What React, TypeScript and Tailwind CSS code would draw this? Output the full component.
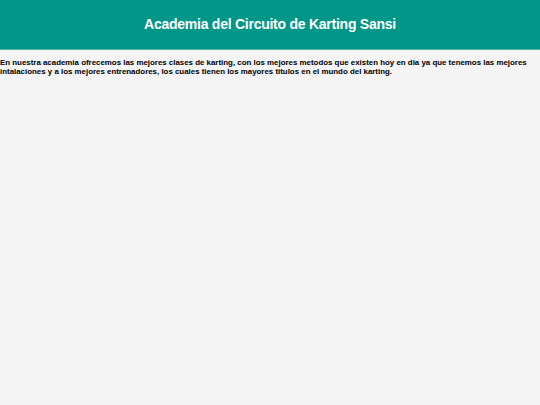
export default function App() {
  return (
    <div className="min-h-[405px] bg-[#f4f4f4] font-['Liberation_Sans',Arial,sans-serif]">
      <header className="h-[50px] bg-[#009688] border-b border-[#4db6ac] flex items-center justify-center">
        <h1 className="text-white font-bold text-[14px] tracking-[-0.25px]">Academia del Circuito de Karting Sansi</h1>
      </header>
      <p className="pt-[8px] text-[7.9px] leading-[9px] font-bold text-black">
        En nuestra academia ofrecemos las mejores clases de karting, con los mejores metodos que existen hoy en dia ya que tenemos las mejores intalaciones y a los mejores entrenadores, los cuales tienen los mayores titulos en el mundo del karting.
      </p>
    </div>
  );
}
